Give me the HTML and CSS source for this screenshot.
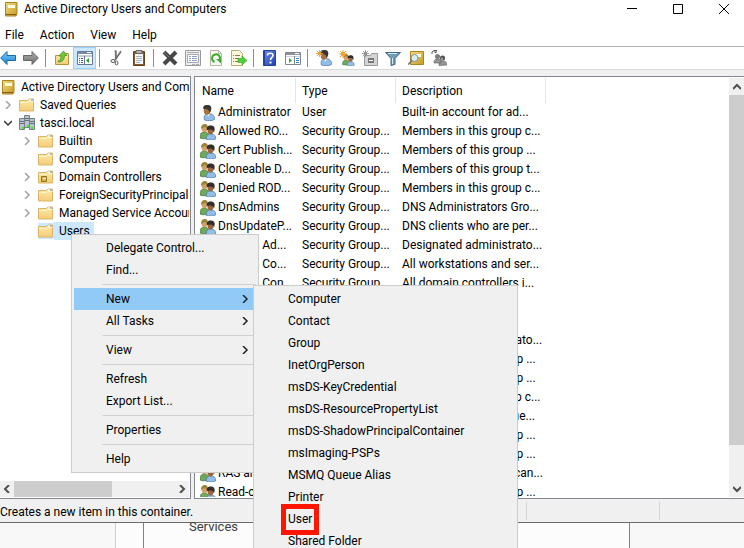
FILE: index.html
```html
<!DOCTYPE html>
<html lang="en">
<head>
<meta charset="utf-8">
<title>Active Directory Users and Computers</title>
<link rel="stylesheet" href="styles.css">
</head>
<body>
<svg class="sprite" aria-hidden="true">
  <defs>
    <linearGradient id="gold" x1="0" x2="1" y1="0" y2="1"><stop offset="0" stop-color="#f3dd7c"/><stop offset="1" stop-color="#c39a26"/></linearGradient>
    <linearGradient id="sand" x1="0" x2="0" y1="0" y2="1"><stop offset="0" stop-color="#ffe9a9"/><stop offset="1" stop-color="#f3cd78"/></linearGradient>
    <linearGradient id="sky" x1="0" x2="0" y1="0" y2="1"><stop offset="0" stop-color="#7fd0f7"/><stop offset="1" stop-color="#1a7fd0"/></linearGradient>
    <linearGradient id="steel" x1="0" x2="0" y1="0" y2="1"><stop offset="0" stop-color="#b0b0b0"/><stop offset="1" stop-color="#6d6d6d"/></linearGradient>
    <linearGradient id="royal" x1="0" x2="1" y1="0" y2="1"><stop offset="0" stop-color="#6d8fe8"/><stop offset="1" stop-color="#1f3fae"/></linearGradient>
  </defs>
  <symbol id="book" viewBox="0 0 16 16">
    <path d="M2.500 1.500h11.500v11.500l-1 2h-10.500z" fill="url(#gold)" stroke="#a98420"/>
    <path d="M5 4h7v3H5z" fill="#fffbe0"/><path d="M3 13.500h10" stroke="#806010"/>
  </symbol>
  <symbol id="folder" viewBox="0 0 16 16">
    <path d="M.500 3.500h8l1.500-1.500h4.500v12h-14z" fill="url(#sand)" stroke="#dcb468"/>
    <path d="M10 3h4" stroke="#fff"/><path d="M12 3h2" stroke="#4c8fe0"/><path d="M1 5.500h8l1-1h4.500" stroke="#fff3cc" fill="none"/>
  </symbol>
  <symbol id="ou" viewBox="0 0 16 16">
    <use href="#folder"/><path d="M3.500 7.500h5v5h-5z" fill="#d5b544" stroke="#8f7422"/><path d="M5 9.500h3" stroke="#fff"/>
  </symbol>
  <symbol id="domain" viewBox="0 0 16 16">
    <path d="M5.500 .500h5v12h-5zM.500 3.500h5v11h-5zM10.500 3.500h5v11h-5z" fill="#b9c3ca" stroke="#73818c"/>
    <path d="M6 3.500h4M6 5.500h4M1 6.500h4M11 6.500h4M1 8.500h4M11 8.500h4" stroke="#66737e"/>
    <path d="M3 12h2v2H3zM8 10h2v2H8zM12 12h2v2h-2z" fill="#3bea13"/>
  </symbol>
  <symbol id="person" viewBox="0 0 16 16">
    <path d="M4.500 15c-1-3 0-6 3.500-6.500 5 0 7 3 6.500 6-2 1.500-8 1.500-10 .5z" fill="#91bee8" stroke="#527ba7" stroke-width=".8"/>
    <path d="M6 8.500l2.500 3 1.500-3z" fill="#f4fbff"/>
    <ellipse cx="7" cy="5.500" rx="3.300" ry="4.200" fill="#a8713f"/><path d="M3.500 4c-1-3 1-4 3.500-4 4 0 5 2 4 5.500l-1.500 3c0-4-2-4.500-6-4.500z" fill="#393730"/>
  </symbol>
  <symbol id="group" viewBox="0 0 16 16">
    <path d="M0 14c0-4 1-6 4.500-6S9 11 9 14c-2 1-7 1-9 0z" fill="#6fa95c" stroke="#3d7137" stroke-width=".7"/>
    <ellipse cx="4.500" cy="4.500" rx="2.900" ry="3.700" fill="#d1a066"/><path d="M1 5c0-4 2-5 4-5 3 0 3 3 2.500 5C7 3 4 2.500 1 5z" fill="#9b8339"/>
    <path d="M6.500 15.500c-.5-4 1-5.500 4.500-5.500 3.500 0 5 2 4.700 5-2 1-6.500 1.300-9.200.5z" fill="#91bee8" stroke="#527ba7" stroke-width=".7"/>
    <ellipse cx="10.500" cy="6.800" rx="3" ry="3.700" fill="#9c653c"/><path d="M7 6c-1-3 1-4.500 3.500-4.500 4 0 5 2.500 3.500 7C13.500 5 10 5 7 6z" fill="#312f2c"/>
  </symbol>
  <symbol id="group-gray" viewBox="0 0 16 16">
    <path d="M3 13c0-3 1-4 4-4s3 2 3 4zM8 15.500c0-4 1-4.500 4-4.500s4 2 4 4z" fill="#969696" stroke="#6a6a6a" stroke-width=".7"/>
    <circle cx="6.500" cy="6.500" r="2.500" fill="#7c7c7c"/><circle cx="11.500" cy="8" r="2.600" fill="#4f4f4f"/><circle cx="11" cy="9" r="1.400" fill="#999"/>
    <path d="M1 4V2l2-1.500h3M4 0v3l2-1.500" fill="none" stroke="#555"/>
  </symbol>
  <symbol id="spark" viewBox="0 0 8 8">
    <path d="M4 0v8M0 4h8M1 1l6 6M7 1L1 7" stroke="currentColor"/><circle cx="4" cy="4" r="2" fill="currentColor"/>
  </symbol>
  <symbol id="back" viewBox="0 0 16 16"><path d="M.700 8L7 1.500v4h8.500v5H7v4z" fill="url(#sky)" stroke="#1468ad"/></symbol>
  <symbol id="forward" viewBox="0 0 16 16"><path d="M15.300 8L9 1.500v4H.500v5H9v4z" fill="url(#steel)" stroke="#686868"/></symbol>
  <symbol id="up" viewBox="0 0 16 16">
    <path d="M1.500 5.500h6l1-2h6v11h-13z" fill="url(#sand)" stroke="#bd9138"/>
    <path d="M4 11c2 0 3-2 3-5H5l4.500-5L13 5.500h-2.500c0 4-2 6.500-6 6.500z" fill="#6cc73b" stroke="#3a8f1f" stroke-width=".7"/>
  </symbol>
  <symbol id="tree" viewBox="0 0 16 16">
    <path d="M.500 1.500h15v13H.500z" fill="#fff" stroke="#6c7890"/><path d="M1 2h14v2H1z" fill="#7c8aa5"/><path d="M10 2.500h4" stroke="#fff"/><path d="M1 5h14v2H1z" fill="#c6cddb"/>
    <path d="M7.500 6v9" stroke="#6c7890"/><path d="M2 8.500h1M4 8.500h2M2 10.500h1M4 10.500h2M2 12.500h1M4 12.500h2" stroke="#31589e"/><path d="M12 8v5L9 10.500z" fill="#20a51c"/>
  </symbol>
  <symbol id="pane" viewBox="0 0 16 16">
    <path d="M.500 2.500h15v12H.500z" fill="#fff" stroke="#80868e"/><path d="M1 3h14v2H1z" fill="#8d949d"/><path d="M10 3.500h4" stroke="#fff"/><path d="M1 6h14v1H1z" fill="#cdd2d8"/>
    <path d="M9.500 6v9" stroke="#80868e"/><path d="M11 8.500h3M11 10.500h3M11 12.500h3" stroke="#3784c6"/><path d="M4 8v5l3-2.500z" fill="#29ad23"/>
  </symbol>
  <symbol id="cut" viewBox="0 0 16 16">
    <path d="M7.500 0L8 9M13 1L7 10" stroke="#8c8c8c" stroke-width="1.800"/><path d="M8 1v8M13 2L7 10" stroke="#4d4d4d" stroke-width=".7"/>
    <ellipse cx="5" cy="11" rx="2" ry="1.500" fill="none" stroke="#555"/><ellipse cx="8.500" cy="13" rx="1.400" ry="2" fill="none" stroke="#555"/>
  </symbol>
  <symbol id="paste" viewBox="0 0 16 16">
    <path d="M2.500 1.500h11v14h-11z" fill="#8b5a30" stroke="#65401f"/><path d="M4 4h8v10H4z" fill="#f4f8fc"/><path d="M5 .500h6v3H5z" fill="#b0b5bb" stroke="#666"/><path d="M5 6.500h6M5 8.500h6M5 10.500h6M5 12.500h4" stroke="#a5b2c4"/>
  </symbol>
  <symbol id="delete" viewBox="0 0 16 16"><path d="M2 2l12 12M14 2L2 14" stroke="#484848" stroke-width="4"/><path d="M2 2l5 5" stroke="#777"/></symbol>
  <symbol id="props" viewBox="0 0 16 16">
    <path d="M.500 .500h15v15H.500z" fill="#eee" stroke="#999"/><path d="M2 2.500h12" stroke="#aaa"/><path d="M2.500 4.500h11v8h-11z" fill="#fff" stroke="#a3a9b4"/><path d="M4 6.500h2M7 6.500h5M4 8.500h2M7 8.500h5M4 10.500h2M7 10.500h5" stroke="#8fa2c4"/><path d="M7 14.500h3M11 14.500h3" stroke="#aaa"/>
  </symbol>
  <symbol id="refresh" viewBox="0 0 16 16">
    <path d="M2.500 .500h8l3 3v12h-11z" fill="#f8f8f2" stroke="#b7b7a7"/><path d="M10.500 .500v3h3" fill="none" stroke="#b7b7a7"/>
    <path d="M6.500 12A4 4 0 1 1 11 11" fill="none" stroke="#3daa2e" stroke-width="2"/><path d="M8 9h5v4.500z" fill="#3daa2e"/>
  </symbol>
  <symbol id="export" viewBox="0 0 16 16">
    <path d="M.500 .500h8l3 3v12H.500z" fill="#fdf7dc" stroke="#b9ab7c"/><path d="M2 5.500h1M4 5.500h5M2 8.500h1M4 8.500h4M2 11.500h1M4 11.500h4" stroke="#8a7b57"/>
    <path d="M7 8.500h4V6l5 4.500-5 4.500v-2.500H7z" fill="#54cf3b" stroke="#2f9f22" stroke-width=".6"/>
  </symbol>
  <symbol id="help" viewBox="0 0 16 16">
    <path d="M1.500 .500h12v15h-12z" fill="url(#royal)" stroke="#2342a0"/><path d="M2.500 1v14" stroke="#23409c"/>
    <path d="M5.500 5.500c0-3 5.500-3 5.500 0 0 2-2.500 2-2.500 4.500" fill="none" stroke="#fff" stroke-width="1.600"/><path d="M7.500 11.500h2v2h-2z" fill="#fff"/>
  </symbol>
  <symbol id="new-user" viewBox="0 0 16 16"><use href="#person" x="1" width="16" height="16"/><use href="#spark" width="7" height="7" color="#f0a22c"/></symbol>
  <symbol id="new-group" viewBox="0 0 16 16"><use href="#group" x="3" y="4" width="13" height="12"/><use href="#spark" width="8" height="8" color="#f0a22c"/></symbol>
  <symbol id="new-ou" viewBox="0 0 16 16"><path d="M2.500 5.500h6l1-2h6v12h-13z" fill="#d4d4d4" stroke="#9b9b9b"/><path d="M6 8h6v5H6z" fill="#777"/><path d="M7 10.500h4" stroke="#fff"/><use href="#spark" width="7" height="7" color="#8f8f8f"/></symbol>
  <symbol id="filter" viewBox="0 0 16 16"><path d="M.500 2.500h15L10 8.500v6l-4 1v-7z" fill="#6d9cb8" stroke="#426a83"/><path d="M3 3.500h9" stroke="#d5eaf4"/><path d="M7.500 8v6" stroke="#d5eaf4"/></symbol>
  <symbol id="find" viewBox="0 0 16 16"><path d="M2.500 1.500h13v13h-13z" fill="url(#gold)" stroke="#a98420"/><path d="M6 4h7v3H6z" fill="#fffbe0"/><circle cx="6.500" cy="8" r="3.500" fill="#d8ecf8" stroke="#7d919e"/><path d="M4 10.500L0 14.500" stroke="#65717b" stroke-width="1.500"/></symbol>
  <symbol id="chev" viewBox="0 0 8 8"><path d="M2 0l4 4-4 4" fill="none" stroke="currentColor" stroke-width="var(--w, 1)"/></symbol>
</svg>

<div class="window">
  <header class="title-bar">
    <svg class="icon"><use href="#book"/></svg>
    <h1>Active Directory Users and Computers</h1>
    <div class="window-buttons">
      <button aria-label="Minimize"><svg viewBox="0 0 10 10"><path d="M0 4.500h10"/></svg></button>
      <button aria-label="Maximize"><svg viewBox="0 0 10 10"><path d="M.500 .500h9v9h-9z"/></svg></button>
      <button aria-label="Close"><svg viewBox="0 0 10 10"><path d="M0 0l10 10M10 0L0 10"/></svg></button>
    </div>
  </header>
  <nav class="menu-bar">
    <button>File</button><button>Action</button><button>View</button><button>Help</button>
  </nav>
  <div class="toolbar" role="toolbar" aria-label="Standard">
    <button aria-label="Back"><svg class="icon"><use href="#back"/></svg></button>
    <button aria-label="Forward"><svg class="icon"><use href="#forward"/></svg></button>
    <i></i>
    <button aria-label="Up one level"><svg class="icon"><use href="#up"/></svg></button>
    <button class="pressed" aria-label="Show console tree" aria-pressed="true"><svg class="icon"><use href="#tree"/></svg></button>
    <i></i>
    <button aria-label="Cut"><svg class="icon"><use href="#cut"/></svg></button>
    <button aria-label="Paste"><svg class="icon"><use href="#paste"/></svg></button>
    <i></i>
    <button aria-label="Delete"><svg class="icon"><use href="#delete"/></svg></button>
    <button aria-label="Properties"><svg class="icon"><use href="#props"/></svg></button>
    <button aria-label="Refresh"><svg class="icon"><use href="#refresh"/></svg></button>
    <button aria-label="Export list"><svg class="icon"><use href="#export"/></svg></button>
    <i></i>
    <button aria-label="Help topics"><svg class="icon"><use href="#help"/></svg></button>
    <button aria-label="Show action pane"><svg class="icon"><use href="#pane"/></svg></button>
    <i></i>
    <button aria-label="New user"><svg class="icon"><use href="#new-user"/></svg></button>
    <button aria-label="New group"><svg class="icon"><use href="#new-group"/></svg></button>
    <button aria-label="New organizational unit"><svg class="icon"><use href="#new-ou"/></svg></button>
    <button aria-label="Filter"><svg class="icon"><use href="#filter"/></svg></button>
    <button aria-label="Find objects"><svg class="icon"><use href="#find"/></svg></button>
    <button aria-label="Add to group"><svg class="icon"><use href="#group-gray"/></svg></button>
  </div>

  <main class="panes">
    <section class="tree-pane">
      <ul class="tree">
        <li class="root"><svg class="icon"><use href="#book"/></svg><span>Active Directory Users and Computers</span></li>
        <li><svg class="twist"><use href="#chev"/></svg><svg class="icon"><use href="#folder"/></svg><span>Saved Queries</span></li>
        <li><svg class="twist open"><use href="#chev"/></svg><svg class="icon"><use href="#domain"/></svg><span>tasci.local</span></li>
        <li class="child"><svg class="twist"><use href="#chev"/></svg><svg class="icon"><use href="#folder"/></svg><span>Builtin</span></li>
        <li class="child"><b class="twist"></b><svg class="icon"><use href="#folder"/></svg><span>Computers</span></li>
        <li class="child"><svg class="twist"><use href="#chev"/></svg><svg class="icon"><use href="#ou"/></svg><span>Domain Controllers</span></li>
        <li class="child"><svg class="twist"><use href="#chev"/></svg><svg class="icon"><use href="#folder"/></svg><span>ForeignSecurityPrincipals</span></li>
        <li class="child"><svg class="twist"><use href="#chev"/></svg><svg class="icon"><use href="#folder"/></svg><span>Managed Service Accounts</span></li>
        <li class="child selected"><b class="twist"></b><svg class="icon"><use href="#folder"/></svg><span>Users</span></li>
      </ul>
      <div class="scroll-x">
        <button aria-label="Scroll left"><svg class="arrow left"><use href="#chev"/></svg></button>
        <div class="track"><div class="thumb"></div></div>
        <button aria-label="Scroll right"><svg class="arrow"><use href="#chev"/></svg></button>
      </div>
    </section>

    <section class="list-pane">
      <div class="list">
        <table>
          <colgroup><col class="c-name"><col class="c-type"><col class="c-desc"></colgroup>
          <thead><tr><th>Name</th><th>Type</th><th>Description</th></tr></thead>
          <tbody>
            <tr><td><svg class="icon"><use href="#person"/></svg>Administrator</td><td>User</td><td>Built-in account for ad...</td></tr>
            <tr><td><svg class="icon"><use href="#group"/></svg>Allowed RO...</td><td>Security Group...</td><td>Members in this group c...</td></tr>
            <tr><td><svg class="icon"><use href="#group"/></svg>Cert Publish...</td><td>Security Group...</td><td>Members of this group ...</td></tr>
            <tr><td><svg class="icon"><use href="#group"/></svg>Cloneable D...</td><td>Security Group...</td><td>Members of this group t...</td></tr>
            <tr><td><svg class="icon"><use href="#group"/></svg>Denied ROD...</td><td>Security Group...</td><td>Members in this group c...</td></tr>
            <tr><td><svg class="icon"><use href="#group"/></svg>DnsAdmins</td><td>Security Group...</td><td>DNS Administrators Gro...</td></tr>
            <tr><td><svg class="icon"><use href="#group"/></svg>DnsUpdateP...</td><td>Security Group...</td><td>DNS clients who are per...</td></tr>
            <tr><td><svg class="icon"><use href="#group"/></svg>Domain Ad...</td><td>Security Group...</td><td>Designated administrato...</td></tr>
            <tr><td><svg class="icon"><use href="#group"/></svg>Domain Co...</td><td>Security Group...</td><td>All workstations and ser...</td></tr>
            <tr><td><svg class="icon"><use href="#group"/></svg>Domain Con...</td><td>Security Group...</td><td>All domain controllers i...</td></tr>
            <tr><td><svg class="icon"><use href="#group"/></svg>Domain Gue...</td><td>Security Group...</td><td>All domain guests</td></tr>
            <tr><td><svg class="icon"><use href="#group"/></svg>Domain Users</td><td>Security Group...</td><td>All domain users</td></tr>
            <tr><td><svg class="icon"><use href="#group"/></svg>Enterprise A...</td><td>Security Group...</td><td>Designated administrato...</td></tr>
            <tr><td><svg class="icon"><use href="#group"/></svg>Enterprise K...</td><td>Security Group...</td><td>Members of this group ...</td></tr>
            <tr><td><svg class="icon"><use href="#group"/></svg>Enterprise R...</td><td>Security Group...</td><td>Members of this group ...</td></tr>
            <tr><td><svg class="icon"><use href="#group"/></svg>Group Polic...</td><td>Security Group...</td><td>Members in this group c...</td></tr>
            <tr><td><svg class="icon"><use href="#person"/></svg>Guest</td><td>User</td><td>Built-in account for gue...</td></tr>
            <tr><td><svg class="icon"><use href="#group"/></svg>Key Admins</td><td>Security Group...</td><td>Members of this group ...</td></tr>
            <tr><td><svg class="icon"><use href="#group"/></svg>Protected Us...</td><td>Security Group...</td><td>Members of this group ...</td></tr>
            <tr><td><svg class="icon"><use href="#group"/></svg>RAS and IAS ...</td><td>Security Group...</td><td>Servers in this group can...</td></tr>
            <tr><td><svg class="icon"><use href="#group"/></svg>Read-only D...</td><td>Security Group...</td><td>Members of this group ...</td></tr>
          </tbody>
        </table>
      </div>
      <div class="scroll-y">
        <button aria-label="Scroll up"><svg class="arrow up"><use href="#chev"/></svg></button>
        <div class="track"><div class="thumb"></div></div>
        <button aria-label="Scroll down"><svg class="arrow down"><use href="#chev"/></svg></button>
      </div>
    </section>
  </main>

  <footer class="status-bar"><span>Creates a new item in this container.</span><span></span><span></span></footer>
</div>

<div class="backdrop"><div></div><div></div><div>Services</div><div></div></div>

<ul class="menu context" role="menu">
  <li><button role="menuitem">Delegate Control...</button></li>
  <li><button role="menuitem">Find...</button></li>
  <li class="rule"></li>
  <li class="current"><button role="menuitem">New<svg class="more"><use href="#chev"/></svg></button>
    <ul class="menu submenu" role="menu">
      <li><button role="menuitem">Computer</button></li>
      <li><button role="menuitem">Contact</button></li>
      <li><button role="menuitem">Group</button></li>
      <li><button role="menuitem">InetOrgPerson</button></li>
      <li><button role="menuitem">msDS-KeyCredential</button></li>
      <li><button role="menuitem">msDS-ResourcePropertyList</button></li>
      <li><button role="menuitem">msDS-ShadowPrincipalContainer</button></li>
      <li><button role="menuitem">msImaging-PSPs</button></li>
      <li><button role="menuitem">MSMQ Queue Alias</button></li>
      <li><button role="menuitem">Printer</button></li>
      <li class="marked"><button role="menuitem">User</button></li>
      <li><button role="menuitem">Shared Folder</button></li>
    </ul>
  </li>
  <li><button role="menuitem">All Tasks<svg class="more"><use href="#chev"/></svg></button></li>
  <li class="rule"></li>
  <li><button role="menuitem">View<svg class="more"><use href="#chev"/></svg></button></li>
  <li class="rule"></li>
  <li><button role="menuitem">Refresh</button></li>
  <li><button role="menuitem">Export List...</button></li>
  <li class="rule"></li>
  <li><button role="menuitem">Properties</button></li>
  <li class="rule"></li>
  <li><button role="menuitem">Help</button></li>
</ul>
</body>
</html>
```

FILE: styles.css
```css
*, *::before, *::after { box-sizing: border-box; }

body {
  margin: 0;
  height: 100vh;
  overflow: hidden;
  display: flex;
  flex-direction: column;
  position: relative;
  background: #fff;
  color: #000;
  font: 12px/18px Roboto, "Open Sans", sans-serif;
}

ul { list-style: none; margin: 0; padding: 0; }
button { border: 0; padding: 0; background: none; color: inherit; font: inherit; }
.sprite { position: absolute; width: 0; height: 0; }
.icon { display: block; width: 16px; height: 16px; flex: none; }

.window {
  flex: 1;
  min-height: 0;
  display: flex;
  flex-direction: column;
  border-bottom: 1px solid #6b6b6b;
}

/* title, menus, toolbar */
.title-bar { display: flex; align-items: center; height: 18px; padding-left: 3px; flex: none; }
.title-bar h1 { flex: 1; margin: 0 0 0 5px; font-size: 12px; font-weight: 400; }
.window-buttons { display: flex; }
.window-buttons button { width: 46px; height: 16px; display: grid; place-items: center; }
.window-buttons button:last-child { margin-right: -3px; }
.window-buttons svg { width: 10px; height: 10px; fill: none; stroke: #000; }

.menu-bar { display: flex; gap: 16px; flex: none; height: 28px; padding: 8px 5px 2px; line-height: 18px; }

.toolbar {
  display: flex;
  align-items: center;
  flex: none;
  height: 24px;
  margin-left: -4px;
  border-top: 1px solid #b4b4b4;
  border-bottom: 1px solid #dadada;
}
.toolbar button { width: 23px; height: 22px; display: grid; place-items: center; }
.toolbar .pressed { background: #cce8ff; box-shadow: inset 0 0 0 1px #99d1ff; }
.toolbar i { width: 1px; height: 18px; margin: 0 4px 0 3px; background: #8c8c8c; }

/* panes */
.panes { flex: 1; min-height: 0; display: flex; gap: 3px; padding-top: 6px; background: #f0f0f0; }
.tree-pane, .list-pane { background: #fff; border: 1px solid #828790; overflow: hidden; display: flex; }
.tree-pane { flex: none; width: 191px; border-left: 0; flex-direction: column; padding: 1px 1px 1px 0; }
.list-pane { flex: 1; min-width: 0; border-right: 0; padding: 1px 0; }

.tree { flex: 1; min-height: 0; overflow: hidden; }
.tree li { display: flex; align-items: center; height: 18px; padding-left: 4px; white-space: nowrap; }
.tree .root { padding-left: 0; }
.tree .child { padding-left: 23px; }
.tree .twist { width: 8px; height: 8px; margin-right: 7px; flex: none; color: #a0a0a0; --w: 1.500; }
.tree .open { transform: rotate(90deg); color: #333; }
.tree span { padding: 0 4px 0 5px; line-height: 18px; }
.tree .selected span { background: #cce8ff; }
.tree .selected .icon { background: #cce8ff; }

.scroll-x, .scroll-y { display: flex; background: #f0f0f0; flex: none; color: #505050; }
.scroll-x { height: 16px; }
.scroll-y { width: 15px; flex-direction: column; }
.scroll-x button { width: 14px; display: grid; place-items: center; }
.scroll-y button { height: 17px; display: grid; place-items: center; }
.track { flex: 1; display: flex; flex-direction: inherit; }
.scroll-y .track { flex-direction: column; }
.thumb { background: #cdcdcd; }
.scroll-x .thumb { width: 61%; }
.scroll-y .thumb { height: 91%; }
.arrow { width: 8px; height: 8px; --w: 2; }
.left { transform: rotate(180deg); }
.up { transform: rotate(-90deg); }
.down { transform: rotate(90deg); }

.list { flex: 1; min-width: 0; overflow: hidden; }
table { table-layout: fixed; width: 351px; border-collapse: separate; border-spacing: 0; }
.c-name { width: 101px; }
.c-type { width: 100px; }
.c-desc { width: 150px; }
th { height: 25px; padding: 0 0 0 6px; text-align: left; font-weight: 400; border-right: 1px solid #e5e5e5; }
th:first-child { padding-left: 7px; }
td { height: 19px; padding: 0 0 0 6px; line-height: 19px; white-space: nowrap; overflow: hidden; }
td:first-child { display: flex; align-items: center; gap: 2px; padding-left: 5px; }

.status-bar { display: flex; flex: none; height: 23px; padding: 3px 0 2px; background: #f0f0f0; line-height: 20px; }
.status-bar span { flex: 1; border-right: 1px solid #d7d7d7; }
.status-bar span:first-child { flex: none; width: 527px; }
.status-bar span:nth-child(2) { flex: none; width: 133px; }
.status-bar span:last-child { border: 0; }

/* page behind the console */
.backdrop { display: flex; flex: none; height: 25px; color: #404040; font-size: 13px; line-height: 8px; background: #fcfcfc; }
.backdrop div:nth-child(1) { width: 116px; background: #f8f8f8; border-right: 1px solid #d0d0d0; }
.backdrop div:nth-child(2) { width: 28px; border-right: 1px solid #808080; }
.backdrop div:nth-child(3) { width: 486px; padding-left: 45px; border-right: 1px solid #808080; }
.backdrop div:nth-child(4) { flex: 1; background: #f8f8f8; }

/* popup menus */
.menu { position: absolute; padding: 2px; background: #f0f0f0; border: 1px solid #ccc; }
.menu li { position: relative; }
.menu button { display: flex; align-items: center; justify-content: space-between; width: 100%; height: 22px; padding: 0 7px 0 32px; text-align: left; }
.menu .rule { height: 7px; margin-left: 28px; padding-top: 3px; }
.menu .rule::before { content: ""; display: block; height: 1px; background: #d2d2d2; }
.menu .current > button { background: #91c9f7; }
.more { width: 8px; height: 8px; --w: 1.500; color: #222; }
.context { left: 71px; top: 234px; width: 188px; }
.submenu { left: 179px; top: -3px; width: 265px; z-index: 1; }
.marked::after {
  content: "";
  position: absolute;
  left: 25px;
  top: -4px;
  width: 38px;
  height: 31px;
  border: 5px solid #ff1500;
}
```
